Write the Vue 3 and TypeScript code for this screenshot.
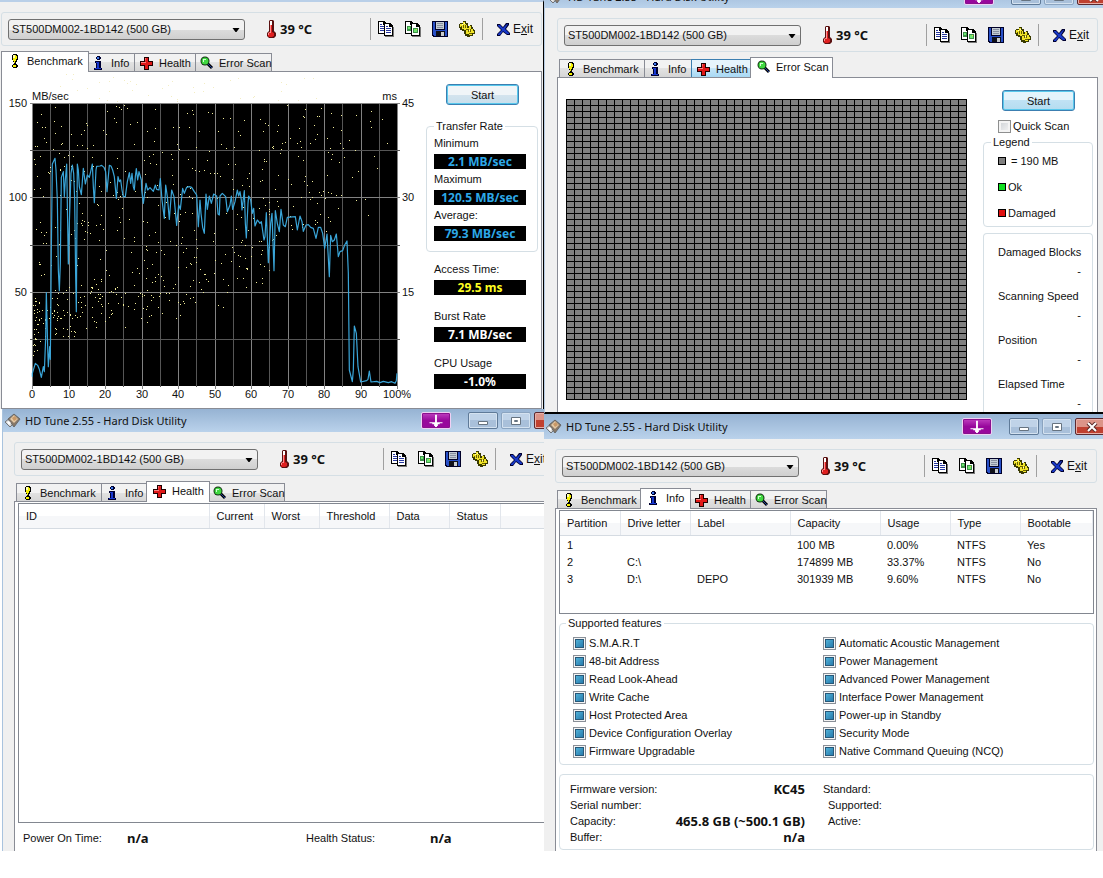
<script setup lang="ts">
type TabName = 'Benchmark' | 'Info' | 'Health' | 'Error Scan'

interface ToolWindow {
  id: string
  active: TabName
  hot?: TabName
  title: boolean
}

const columns: ToolWindow[][] = [
  [
    { id: 'bench', active: 'Benchmark', title: false },
    { id: 'health', active: 'Health', title: true },
  ],
  [
    { id: 'scan', active: 'Error Scan', hot: 'Health', title: true },
    { id: 'info', active: 'Info', title: true },
  ],
]

const tabs: { name: TabName; icon: string; cls: string }[] = [
  { name: 'Benchmark', icon: '#i-bulb', cls: 't-bench' },
  { name: 'Info', icon: '#i-info', cls: 't-info' },
  { name: 'Health', icon: '#i-cross', cls: 't-health' },
  { name: 'Error Scan', icon: '#i-lens', cls: 't-scan' },
]

const tools = [
  { label: 'Copy text', icon: '#i-copy' },
  { label: 'Copy picture', icon: '#i-shot' },
  { label: 'Save', icon: '#i-save' },
  { label: 'Options', icon: '#i-gear' },
]

const rates = [
  { label: 'Minimum', value: '2.1 MB/sec' },
  { label: 'Maximum', value: '120.5 MB/sec' },
  { label: 'Average:', value: '79.3 MB/sec' },
]
const others = [
  { label: 'Access Time:', value: '29.5 ms', cls: 'yellow' },
  { label: 'Burst Rate', value: '7.1 MB/sec', cls: 'white' },
  { label: 'CPU Usage', value: '-1.0%', cls: 'white' },
]

const scanStats = ['Damaged Blocks', 'Scanning Speed', 'Position', 'Elapsed Time']
const healthCols = ['ID', 'Current', 'Worst', 'Threshold', 'Data', 'Status', '']
const infoCols = ['Partition', 'Drive letter', 'Label', 'Capacity', 'Usage', 'Type', 'Bootable']
const partitions = [
  ['1', '', '', '100 MB', '0.00%', 'NTFS', 'Yes'],
  ['2', 'C:\\', '', '174899 MB', '33.37%', 'NTFS', 'No'],
  ['3', 'D:\\', 'DEPO', '301939 MB', '9.60%', 'NTFS', 'No'],
]
const features = [
  'S.M.A.R.T', 'Automatic Acoustic Management',
  '48-bit Address', 'Power Management',
  'Read Look-Ahead', 'Advanced Power Management',
  'Write Cache', 'Interface Power Management',
  'Host Protected Area', 'Power-up in Standby',
  'Device Configuration Overlay', 'Security Mode',
  'Firmware Upgradable', 'Native Command Queuing (NCQ)',
]
const drive = [
  ['Firmware version:', 'KC45', 'Standard:'],
  ['Serial number:', '', 'Supported:'],
  ['Capacity:', '465.8 GB (~500.1 GB)', 'Active:'],
  ['Buffer:', 'n/a', ''],
]

const vLines = Array.from({ length: 21 }, (_, i) => ({ x: Math.round(32 + i * 18.25), major: i % 2 === 0 }))
const hLines = Array.from({ length: 6 }, (_, i) => ({ y: Math.round(103 + i * 47.2), major: i % 2 === 0 }))
const xLabels = Array.from({ length: 11 }, (_, i) => ({ x: Math.round(32 + i * 36.5), text: i === 10 ? '100%' : String(i * 10) }))
const yLabels = [
  { y: 107, left: '150', right: '45' },
  { y: 201, left: '100', right: '30' },
  { y: 296, left: '50', right: '15' },
]

// Transfer curve, in thirds of a chart unit
const curve = `97,860 97,850 106,820 113,826 118,838 124,862 130,830 133,845 137,745 139,608 143,770 145,830 149,770
151,808 154,480 157,222 165,205 168,240 172,330 175,540 178,602 181,520 184,262 190,245 193,320 196,270 200,222 203,400
205,522 208,400 213,250 217,225 221,250 224,330 227,560 229,665 232,222 235,240 238,290 244,314 250,235 256,282 262,255
268,262 272,245 277,222 280,290 283,338 288,240 290,229 300,228 305,226 312,232 317,245 321,305 328,226 333,228 338,240
343,260 349,325 354,260 358,275 362,270 366,300 370,320 376,320 382,275 388,248 392,280 396,250 400,290 403,300 406,260
409,236 413,270 417,245 424,270 425,300 430,340 436,295 438,280 443,300 450,293 460,304 466,285 470,298 477,300 481,266
486,330 493,385 497,285 502,320 508,388 515,300 522,320 530,406 536,345 541,358 548,295 553,310 560,292 568,290 575,292
583,305 590,315 595,410 600,330 603,370 608,412 613,430 618,312 622,358 628,318 634,340 641,312 650,318 654,372 658,375
660,318 667,310 677,320 682,365 690,345 694,318 698,358 705,335 712,300 716,318 720,305 724,330 726,360 733,302 736,400
739,444 744,340 746,318 752,330 757,370 761,355 765,408 772,390 780,400 784,395 792,450 795,440 799,368 805,518 812,400
816,370 822,542 826,362 832,400 838,425 843,358 850,405 856,410 862,382 886,380 892,420 900,378 906,395 910,424 918,405
925,404 932,412 940,415 948,445 955,412 962,412 968,430 974,475 981,432 988,560 992,436 997,455 1003,450 1009,432
1015,500 1020,485 1028,482 1034,465 1041,453 1045,550 1048,840 1057,875 1060,840 1063,708 1069,730 1074,830 1082,876
1100,872 1104,868 1108,843 1113,876 1130,874 1140,878 1150,874 1165,878 1175,875 1185,880 1189,872 1191,850`

interface Dot { x: number; y: number }

// Access-time samples: a dense rising band plus a loose scatter that thins to the right
function makeDots(): { inside: Dot[]; above: Dot[] } {
  let seed = 4711
  const rnd = () => {
    seed = (seed * 16807) % 2147483647
    return seed / 2147483647
  }
  const inside: Dot[] = []
  for (let i = 0; i < 250; i++) {
    const t = Math.pow(rnd(), 1.6)
    const spread = (rnd() + rnd() - 1) * 34
    inside.push({ x: Math.round(33 + t * 240), y: Math.round(324 - 58 * Math.pow(t, 0.8) + spread) })
  }
  for (let i = 0; i < 380; i++) {
    const t = Math.pow(rnd(), 1.2)
    const low = 280 - 60 * t
    const x = Math.round(33 + t * 362)
    if (x > 345 && i % 3 > 0) continue
    inside.push({ x, y: Math.round(104 + rnd() * (low - 104)) })
  }
  const above: Dot[] = []
  for (let i = 0; i < 44; i++) {
    above.push({ x: Math.round(42 + rnd() * 290), y: Math.round(74 + rnd() * 27) })
  }
  return { inside, above }
}
const dots = makeDots()
</script>

<template>
  <svg class="defs" aria-hidden="true">
    <symbol id="i-bulb" viewBox="0 0 16 16">
      <path d="M6 1h4v1h1v5h-1v2h-1v2h-2v-2h-1v-2h-1v-5h1z" fill="#000" />
      <path d="M6 2h3v1h1v3h-1v2h-1v2h-1v-2h-1z" fill="#f4f000" />
      <path d="M6 2h2v3h-2z" fill="#ffffb0" />
      <path d="M6 11h4v1h1v2h-1v1h-4v-1h-1v-2h1z" fill="#000" />
      <path d="M6 12h3v2h-3z" fill="#f4f000" />
    </symbol>
    <symbol id="i-info" viewBox="0 0 16 16">
      <path d="M6 1h3v1h1v2h-1v1h-3v-1h-1v-2h1z M4 6h6v7h1v2h-8v-2h2v-5h-1z" fill="#000030" />
      <path d="M6 2h2v2h-2z" fill="#3c78e8" />
      <path d="M5 7h3v6h2v1h-6v-1h2v-5h-1z" fill="#1838d0" />
    </symbol>
    <symbol id="i-cross" viewBox="0 0 16 16">
      <path d="M5 2h5v4h4v5h-4v4h-5v-4h-4v-5h4z" fill="#200000" />
      <path d="M6 3h3v4h4v3h-4v4h-3v-4h-4v-3h4z" fill="#e01818" />
      <path d="M6 3h1v4h-5v1h5v-1z" fill="#ff8080" />
    </symbol>
    <symbol id="i-lens" viewBox="0 0 16 16">
      <path d="M8 8l5 5" stroke="#000" stroke-width="3" />
      <path d="M8 8l5 5" stroke="#2040a0" stroke-width="1" />
      <circle cx="6" cy="6" r="4.5" fill="#103010" />
      <circle cx="6" cy="6" r="3.5" fill="#40d840" />
      <path d="M4 4h3v1h-2v2h-1z" fill="#d0ffd0" />
    </symbol>
    <symbol id="i-copy" viewBox="0 0 16 16">
      <path d="M0 0h6l3 3v10h-9z" fill="#000" />
      <path d="M1 1h4v3h3v8h-7z" fill="#fff" />
      <path d="M2 3h2v1h-2zM2 5h4v1h-4zM2 7h4v1h-4zM2 9h4v1h-4z" fill="#2838a0" />
      <path d="M8 4h5l3 3v9h-9z" fill="#777" />
      <path d="M6 2h6l3 3v10h-9z" fill="#000" />
      <path d="M7 3h4v3h3v8h-7z" fill="#fff" />
      <path d="M8 5h2v1h-2zM8 7h5v1h-5zM8 9h5v1h-5zM8 11h5v1h-5z" fill="#2838a0" />
    </symbol>
    <symbol id="i-shot" viewBox="0 0 16 16">
      <path d="M0 0h6l3 3v10h-9z" fill="#000" />
      <path d="M1 1h4v3h3v8h-7z" fill="#fff" />
      <path d="M2 5h4v5h-4z" fill="#3c9048" />
      <path d="M3 6h2v2h-2z" fill="#70e870" />
      <path d="M8 4h5l3 3v9h-9z" fill="#777" />
      <path d="M6 2h6l3 3v10h-9z" fill="#000" />
      <path d="M7 3h4v3h3v8h-7z" fill="#fff" />
      <path d="M8 7h5v5h-5z" fill="#3c9048" />
      <path d="M9 8h3v3h-3z" fill="#70e870" />
      <path d="M11 8h1v1h-1z" fill="#e8e040" />
    </symbol>
    <symbol id="i-save" viewBox="0 0 16 16">
      <path d="M0 0h16v16h-15l-1-1z" fill="#000028" />
      <path d="M1 1h2v8h10v-8h2v14h-13l-1-1z" fill="#2850c8" />
      <path d="M4 1h8v7h-8z" fill="#c4ccd4" />
      <path d="M5 2h6v1h-6zM5 4h6v1h-6zM5 6h6v1h-6z" fill="#8890a0" />
      <path d="M4 10h9v5h-9z" fill="#101018" />
      <path d="M9 11h3v4h-3z" fill="#c8ccd0" />
    </symbol>
    <symbol id="i-gear" viewBox="0 0 16 16">
      <path d="M0 3h1v-1h3v-2h3v2h2v3h2v-1h2v2h1v2h1v1h1v4h-2v2h-3v1h-3v-1h-2v-2h-1v-3h-2v-1h-2v-2h-2z" fill="#3a3a00" />
      <path d="M1 3h3v-2h2v2h1v1h1v3h2v-2h2v3h2v2h1v2h-2v2h-3v-1h-3v-4h-2v-1h-2v-2h-2z" fill="#f0e428" />
      <path d="M4 4h1v3h-1zM6 4h1v3h-1zM9 8h1v3h-1zM11 8h1v3h-1zM2 5h1v1h-1zM7 8h2v1h-2zM10 12h3v1h-3z" fill="#6a6000" />
      <path d="M3 3h1v1h-1zM10 9h1v1h-1zM5 2h1v1h-1z" fill="#ffffc8" />
    </symbol>
    <symbol id="i-exit" viewBox="0 0 13 13">
      <path d="M0 1h3l3 3 3-4h3v2l-3 4 4 4v2h-3l-4-3-3 4h-3v-2l4-4-4-4z" fill="#000030" />
      <path d="M1 2h2l3 3 4-4h1l-3 5 4 4v1h-2l-4-3-3 4h-2v-1l4-4-4-4z" fill="#1838c8" />
    </symbol>
    <symbol id="i-thermo" viewBox="0 0 10 18">
      <path d="M4 0h3l1 1v10l2 2v3l-2 2h-5l-2-2v-3l2-2v-10z" fill="#5a1010" />
      <path d="M4 1h2v11l2 1v3l-2 1h-3l-1-1v-3l2-1z" fill="#e02020" />
      <path d="M4 1h2v4h-2z" fill="#fff" />
      <path d="M4 5h1v8h-2v2h-1v-2l2-1z" fill="#ff9090" />
    </symbol>
    <symbol id="i-app" viewBox="0 0 16 16">
      <path d="M0 9l6-5 4 5-5 5z" fill="#d8d8d8" stroke="#707478" />
      <path d="M3 6l6-5 6 5-6 8z" fill="#887868" stroke="#686868" />
      <path d="M5 6l4-4 4 4-4 4z" fill="#e4c8a4" />
      <path d="M7 5l3-2 2 3-3 2z" fill="#c89868" />
      <path d="M2 9l2-1 2 2-2 2z" fill="#fff" />
    </symbol>
  </svg>

  <main class="board">
    <div v-for="(col, c) in columns" :key="c" class="column">
      <section v-for="w in col" :key="w.id" :class="['win', w.id]">
        <header v-if="w.title" class="titlebar">
          <svg class="ic16"><use href="#i-app" /></svg>
          <h2>HD Tune 2.55 - Hard Disk Utility</h2>
          <button type="button" class="down" aria-label="Send to tray">
            <svg viewBox="0 0 30 16"><path d="M14 2h2v8h6v1h-3v1h-2v2h-1v1h-2v-1h-1v-2h-2v-1h-3v-1h6z" fill="#fff" /></svg>
          </button>
          <button type="button" class="cap min" aria-label="Minimize">
            <svg viewBox="0 0 12 10"><path d="M1.5 5.5h9v3h-9z" fill="#fff" stroke="#667380" /></svg>
          </button>
          <button type="button" class="cap max" aria-label="Maximize">
            <svg viewBox="0 0 12 10"><path d="M1.5 1.5h9v7h-9zM4.5 4.5h3v1h-3z" fill="#fff" stroke="#667380" /></svg>
          </button>
          <button type="button" class="cap close" aria-label="Close">
            <svg viewBox="0 0 12 10"><path d="M2 1l8 8M10 1l-8 8" stroke="#5c2a28" stroke-width="4" /><path d="M2 1l8 8M10 1l-8 8" stroke="#fff" stroke-width="2" /></svg>
          </button>
        </header>

        <div class="body">
          <div class="toolbar">
            <div class="combo">
              <select aria-label="Drive"><option>ST500DM002-1BD142 (500 GB)</option></select>
              <svg viewBox="0 0 7 4"><path d="M0 0h7l-3 4h-1z" fill="#000" /></svg>
            </div>
            <div class="temp">
              <svg><use href="#i-thermo" /></svg>
              <span>39 °C</span>
            </div>
            <div class="tools">
              <button v-for="t in tools" :key="t.label" type="button" :aria-label="t.label">
                <svg class="ic16"><use :href="t.icon" /></svg>
              </button>
            </div>
            <button type="button" class="exit">
              <svg><use href="#i-exit" /></svg>
              <span>E<u>x</u>it</span>
            </button>
          </div>

          <div class="tabs" role="tablist">
            <button
              v-for="t in tabs"
              :key="t.name"
              type="button"
              role="tab"
              :aria-selected="t.name === w.active"
              :class="['tab', t.cls, { on: t.name === w.active, hot: t.name === w.hot }]"
            >
              <svg class="ic16"><use :href="t.icon" /></svg>
              <span>{{ t.name }}</span>
            </button>
          </div>

          <div v-if="w.id === 'bench'" class="panel p-bench">
            <svg class="chart" viewBox="2 72 424 336">
              <rect v-for="(d, i) in dots.above" :key="'a' + i" :x="d.x" :y="d.y" width="1" height="1" fill="#f3edc4" />
              <rect x="32" y="103" width="366" height="283" fill="#000" />
              <g class="crisp">
                <rect v-for="l in vLines" :key="'v' + l.x" :x="l.x" y="103" width="1" :height="l.major ? 286 : 284" :fill="l.major ? '#828282' : '#565656'" />
                <rect v-for="l in hLines" :key="'h' + l.y" x="30" :y="l.y" width="370" height="1" :fill="l.major ? '#828282' : '#565656'" />
                <rect v-for="(d, i) in dots.inside" :key="'d' + i" :x="d.x" :y="d.y" width="1" height="1" fill="#f2ee9a" />
              </g>
              <g transform="translate(0 90) scale(0.33333)">
                <polyline :points="curve" fill="none" stroke="#3aa5d8" stroke-width="3.6" stroke-linejoin="round" />
              </g>
              <text x="32" y="100">MB/sec</text>
              <text x="397" y="100" text-anchor="end">ms</text>
              <template v-for="l in yLabels" :key="l.y">
                <text x="27" :y="l.y" text-anchor="end">{{ l.left }}</text>
                <text x="402" :y="l.y">{{ l.right }}</text>
              </template>
              <text v-for="l in xLabels" :key="l.text" :x="l.x" y="398" text-anchor="middle">{{ l.text }}</text>
            </svg>
            <aside class="side">
              <button type="button" class="start">Start</button>
              <fieldset class="rates">
                <legend>Transfer Rate</legend>
                <div v-for="r in rates" :key="r.label" class="readout">
                  <span>{{ r.label }}</span><output>{{ r.value }}</output>
                </div>
              </fieldset>
              <div class="others">
                <div v-for="r in others" :key="r.label" class="readout">
                  <span>{{ r.label }}</span><output :class="r.cls">{{ r.value }}</output>
                </div>
              </div>
            </aside>
          </div>

          <div v-else-if="w.id === 'scan'" class="panel p-scan">
            <div class="blocks" role="img" aria-label="Block map"></div>
            <aside class="side">
              <button type="button" class="start">Start</button>
              <label class="quick"><input type="checkbox" />Quick Scan</label>
              <fieldset class="legend">
                <legend>Legend</legend>
                <p class="size"><i></i>= 190 MB</p>
                <p class="ok"><i></i>Ok</p>
                <p class="bad"><i></i>Damaged</p>
              </fieldset>
              <dl class="stats">
                <div v-for="s in scanStats" :key="s">
                  <dt>{{ s }}</dt>
                  <dd>-</dd>
                </div>
              </dl>
            </aside>
          </div>

          <div v-else-if="w.id === 'health'" class="panel p-health">
            <div class="list">
              <table>
                <colgroup>
                  <col class="w191" /><col class="w55" /><col class="w55" /><col class="w70" /><col class="w60" /><col class="w51" /><col />
                </colgroup>
                <thead>
                  <tr><th v-for="h in healthCols" :key="h">{{ h }}</th></tr>
                </thead>
              </table>
            </div>
            <div class="summary">
              <span>Power On Time:</span><b>n/a</b>
              <span>Health Status:</span><b>n/a</b>
            </div>
          </div>

          <div v-else class="panel p-info">
            <div class="list">
              <table>
                <colgroup>
                  <col class="w60" /><col class="w70" /><col class="w100" /><col class="w90" /><col class="w70" /><col class="w70" /><col />
                </colgroup>
                <thead>
                  <tr><th v-for="h in infoCols" :key="h">{{ h }}</th></tr>
                </thead>
                <tbody>
                  <tr v-for="p in partitions" :key="p[0]">
                    <td v-for="(v, i) in p" :key="i">{{ v }}</td>
                  </tr>
                </tbody>
              </table>
            </div>
            <fieldset class="features">
              <legend>Supported features</legend>
              <label v-for="f in features" :key="f"><input type="checkbox" checked />{{ f }}</label>
            </fieldset>
            <div class="drive">
              <div v-for="(d, i) in drive" :key="i" :class="['row', { sub: i > 0 }]">
                <span>{{ d[0] }}</span><b>{{ d[1] }}</b><span class="last">{{ d[2] }}</span>
              </div>
            </div>
          </div>
        </div>
      </section>
    </div>
  </main>
</template>

<style>
body {
  margin: 0;
  background: #fff;
}
</style>

<style scoped>
.defs {
  position: absolute;
  width: 0;
  height: 0;
}
.board {
  display: grid;
  grid-template-columns: minmax(0, 544fr) minmax(0, 559fr);
  align-items: start;
  font: 11px/16px "Liberation Sans", Arial, sans-serif;
  color: #111;
  white-space: nowrap;
}
button,
select {
  font: inherit;
  color: inherit;
  padding: 0;
  margin: 0;
}
svg {
  display: block;
  flex: none;
}
.ic16 {
  width: 16px;
  height: 16px;
}
.tools svg,
.crisp {
  shape-rendering: crispEdges;
}
.win {
  overflow: hidden;
  background: #f0f0f0;
}
.bench {
  border-top: 2px solid #b9cfe8;
  border-right: 1px solid #000;
}
.bench .body {
  padding: 10px 1px 0 1px;
}
.scan {
  border-left: 1px solid #b6cbe2;
  border-bottom: 2px solid #000;
}
.scan .body {
  padding: 10px 5px 0 12px;
}
.health {
  margin-left: 2px;
  border-left: 1px solid #a9c3de;
}
.health .body {
  width: calc(100% + 12px);
  box-sizing: border-box;
  padding: 10px 0 0 11px;
}
.info .body {
  padding: 10px 6px 0 11px;
}

/* title bar */
.titlebar {
  display: flex;
  align-items: center;
  height: 23px;
  padding-left: 2px;
  background: linear-gradient(#96b3d3, #bad2eb);
}
.health .titlebar {
  margin-right: -38px;
}
.scan .titlebar {
  margin: -15px -22px 0 0;
  padding-left: 3px;
}
.info .titlebar {
  height: 25px;
  margin-right: -20px;
}
.titlebar h2 {
  flex: 1;
  margin: 0 0 0 4px;
  font: 11px/16px "Noto Sans", "Open Sans", sans-serif;
}
.down {
  width: 30px;
  height: 17px;
  margin-right: 17px;
  border: 1px solid #f0d0f4;
  border-radius: 2px;
  background: linear-gradient(#c040c0, #98089c 50%);
  box-shadow: inset 0 0 0 1px #8a108e;
}
.cap {
  display: flex;
  align-items: center;
  justify-content: center;
  box-sizing: border-box;
  width: 30px;
  height: 17px;
  margin-right: 3px;
  border: 1px solid #5f7a98;
  border-radius: 2px;
  background: linear-gradient(#c0d3e8 50%, #a9c0da 50%);
  box-shadow: inset 0 0 0 1px #d4e2f0;
}
.cap svg {
  width: 12px;
  height: 10px;
}
.max {
  border-color: #8ba4c0;
}
.close {
  width: 48px;
  margin-right: 0;
  padding-right: 14px;
  border-color: #5c2a30;
  background: linear-gradient(#dc9488 50%, #c04030 50%);
  box-shadow: inset 0 0 0 1px #e8b0a8;
}

/* toolbar */
.toolbar {
  display: flex;
  align-items: center;
  box-sizing: border-box;
  height: 34px;
  padding-left: 6px;
  border: 1px solid #d5dfe5;
  border-radius: 3px;
}
.combo {
  position: relative;
  width: 237px;
  height: 21px;
  margin-right: 21px;
}
.combo select {
  width: 100%;
  height: 100%;
  padding: 0 20px 0 3px;
  border: 1px solid #707070;
  border-radius: 3px;
  appearance: none;
  background: linear-gradient(#f2f2f2 50%, #dcdcdc 50%, #cfcfcf);
}
.combo svg {
  position: absolute;
  right: 5px;
  top: 9px;
  width: 8px;
  height: 4px;
  pointer-events: none;
}
.temp {
  display: flex;
  align-items: center;
  gap: 4px;
  width: 104px;
  font: bold 13px/16px "Noto Sans", sans-serif;
}
.temp svg {
  width: 10px;
  height: 18px;
}
.tools {
  display: flex;
  align-items: center;
  gap: 11px;
  height: 22px;
  padding: 0 7px;
  border: 1px solid #a0a0a0;
  border-width: 0 1px;
}
.tools button,
.exit {
  border: 0;
  background: none;
}
.exit {
  display: flex;
  align-items: center;
  gap: 3px;
  margin-left: 14px;
}
.exit span {
  font-size: 12px;
}
.exit svg {
  width: 13px;
  height: 13px;
}

/* tabs */
.tabs {
  display: flex;
  align-items: flex-end;
  height: 20px;
  margin: 5px 0 0 2px;
}
.tab {
  display: flex;
  align-items: center;
  gap: 4px;
  box-sizing: border-box;
  height: 18px;
  padding-left: 3px;
  border: 1px solid #898c95;
  border-bottom: 0;
  border-right-width: 0;
  background: linear-gradient(#f2f2f2 50%, #e2e2e2 50%, #d6d6d6);
}
.t-bench { width: 85px; }
.t-info { width: 47px; }
.t-health { width: 61px; padding-left: 4px; }
.t-scan { width: 77px; border-right-width: 1px; }
.tab.hot {
  border-color: #3c7fb1;
  background: linear-gradient(#e6f4fc 50%, #c4e5f8 50%, #a8d9f4);
}
.tab.on {
  position: relative;
  height: 21px;
  margin: 0 -2px -1px;
  padding: 0 0 2px 5px;
  border-right-width: 1px;
  background: #fff;
}
.t-bench.on { width: 88px; }
.t-info.on { width: 51px; }
.t-health.on { width: 64px; }
.t-scan.on { width: 83px; }

.panel {
  box-sizing: border-box;
  border: 1px solid #898c95;
  background: #fff;
}
fieldset {
  min-width: 0;
  margin: 0;
  padding: 0;
  border: 1px solid #d5dfe5;
  border-radius: 4px;
}
legend {
  margin-left: 7px;
  padding: 0 2px;
}
.start {
  width: 73px;
  height: 21px;
  border: 1px solid #3c7fb1;
  border-radius: 3px;
  background: linear-gradient(#f0f5f8 50%, #d4e4ee 50%, #c8dfec);
  box-shadow: inset 0 0 0 1px #58c8ec;
}

/* benchmark */
.p-bench {
  display: flex;
}
.chart {
  flex: 1;
  min-width: 0;
}
.chart text {
  font: 11px "Liberation Sans", Arial, sans-serif;
  fill: #111;
}
.p-bench .side {
  width: 112px;
  padding: 12px 3px 0 0;
}
.p-bench .start {
  display: block;
  margin: 0 0 13px 20px;
}
.rates {
  padding: 1px 0 10px;
}
.readout {
  display: flex;
  flex-direction: column;
  width: 92px;
  margin-left: 7px;
}
.rates .readout + .readout {
  margin-top: 2px;
}
.readout output {
  height: 15px;
  margin-top: 3px;
  background: #000;
  color: #2da9e8;
  font: bold 12px/15px "Noto Sans", sans-serif;
  text-align: center;
}
.readout output.yellow {
  color: #ffff20;
}
.readout output.white {
  color: #fff;
}
.others {
  display: flex;
  flex-direction: column;
  gap: 13px;
  margin: 9px 0 0 1px;
}

/* error scan */
.p-scan {
  display: flex;
  padding: 0 4px 0 8px;
  border-bottom: 0;
}
.blocks {
  flex: 1;
  height: 301px;
  margin: 21px 16px 0 0;
  background:
    linear-gradient(90deg, #000 1px, transparent 1px) 0 0 / 8px 6px,
    linear-gradient(#000 1px, #808080 1px) 0 0 / 8px 6px;
}
.p-scan .side {
  width: 110px;
  padding-top: 12px;
}
.p-scan .start {
  display: block;
  margin-left: 19px;
  background: linear-gradient(#e4f4fc 50%, #c0e2f4 50%, #b4dcf0);
}
.quick {
  display: flex;
  align-items: center;
  gap: 2px;
  margin: 7px 0 0 15px;
}
input {
  appearance: none;
  box-sizing: border-box;
  flex: none;
  width: 13px;
  height: 13px;
  margin: 0;
  border: 1px solid #8e8f8f;
  background: linear-gradient(135deg, #ccd0d4, #f6f6f6);
  box-shadow: inset 0 0 0 2px #f4f4f4;
}
.legend {
  padding: 3px 0 5px;
}
.legend p {
  display: flex;
  align-items: center;
  height: 16px;
  margin: 0 0 10px 14px;
}
.legend p:last-child {
  margin-bottom: 0;
}
.legend i {
  box-sizing: border-box;
  width: 8px;
  height: 8px;
  margin-right: 2px;
  border: 1px solid #000;
  background: #808080;
}
.legend .size i { margin-right: 5px; }
.legend .ok i { background: #10e020; }
.legend .bad i { background: #e01010; }
.stats {
  display: flex;
  flex-direction: column;
  gap: 9px;
  margin: 6px 0 0;
  padding: 10px 11px 1px 14px;
  border: 1px solid #d5dfe5;
  border-bottom: 0;
  border-radius: 4px 4px 0 0;
}
.stats dd {
  margin: 3px 0 0;
  text-align: right;
}

/* lists */
.list {
  box-sizing: border-box;
  border: 1px solid #828790;
}
table {
  width: 100%;
  table-layout: fixed;
  border-collapse: collapse;
}
th,
td {
  padding: 0 0 0 7px;
  text-align: left;
  font-weight: normal;
}
th {
  height: 24px;
  border-right: 1px solid #e2e6ec;
  border-bottom: 1px solid #d5dbe2;
  background: linear-gradient(#fff 50%, #f6f7f9 50%);
  box-sizing: border-box;
}
td {
  height: 17px;
  line-height: 17px;
}
tbody tr:first-child td {
  padding-top: 1px;
}
.w51 { width: 51px; }
.w55 { width: 55px; }
.w60 { width: 60px; }
.w70 { width: 70px; }
.w90 { width: 90px; }
.w100 { width: 100px; }
.w191 { width: 190px; }

.p-health {
  padding: 1px 0 0 3px;
  border-bottom: 0;
}
.p-health .list {
  height: 320px;
}
.summary {
  display: grid;
  grid-template-columns: 104px 179px 124px 1fr;
  padding: 7px 0 5px 5px;
}
b {
  font: bold 13px/16px "Noto Sans", sans-serif;
}

/* info */
.p-info {
  padding: 1px 2px 1px 3px;
  border-bottom: 0;
}
.p-info .list {
  min-height: 104px;
  margin-bottom: 1px;
}
.features {
  display: grid;
  grid-template-columns: 250px 1fr;
  grid-auto-rows: 18px;
  padding: 3px 0 4px 13px;
}
.features legend {
  margin-left: -7px;
}
.features label {
  display: flex;
  align-items: center;
  gap: 3px;
}
.features input {
  border-color: #8a9098;
  background: linear-gradient(135deg, #5cc0e4, #1c6ca0);
  box-shadow: inset 0 0 0 1px #f4f4f4, inset 0 0 0 2px #285878;
}
.drive {
  margin-top: 9px;
  padding: 6px 0 4px 10px;
  border: 1px solid #d5dfe5;
  border-radius: 4px;
}
.row {
  display: grid;
  grid-template-columns: 100px 135px 1fr;
  height: 16px;
}
.row b {
  text-align: right;
}
.last {
  padding-left: 18px;
}
.sub .last {
  padding-left: 23px;
}
</style>
